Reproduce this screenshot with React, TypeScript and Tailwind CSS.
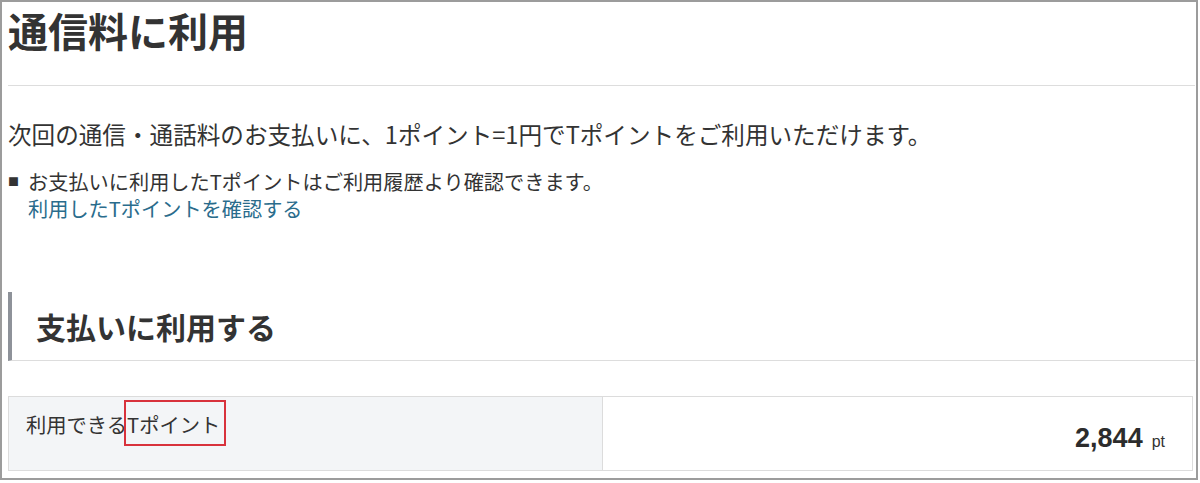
import React from "react";

export default function App() {
  const jp = { fontFamily: '"Noto Sans CJK JP", "Noto Sans", sans-serif' };
  return (
    <div className="w-[1200px] h-[483px] bg-white" style={jp}>
      <div className="w-[1198px] h-[480px] border-2 border-[#9c9c9c] pl-[6px] pr-[1px] text-[#333333]">
        <div className="h-[84px] border-b border-[#dddddd]">
          <h1 className="text-[40px] leading-[56px] font-bold text-[#333333]">通信料に利用</h1>
        </div>
        <p className="mt-[33px] text-[23.6px] leading-[31px]">
          次回の通信・通話料のお支払いに、1ポイント=1円でTポイントをご利用いただけます。
        </p>
        <div className="mt-[18px] flex text-[20.2px] leading-[27px]">
          <span className="w-[20px] h-[27px] text-[11px] flex items-center">■</span>
          <div className="flex flex-col">
            <span>お支払いに利用したTポイントはご利用履歴より確認できます。</span>
            <span className="text-[#2a6c8c]">利用したTポイントを確認する</span>
          </div>
        </div>
        <div className="mt-[70px] h-[69px] border-l-4 border-b border-l-[#8e9299] border-b-[#dddddd] pl-[24px] flex items-center">
          <h2 className="text-[30px] font-bold leading-[40px] text-[#333333]">支払いに利用する</h2>
        </div>
        <div className="mt-[35px] mr-[2px] h-[75px] flex border border-[#dcdcdc]">
          <div className="w-[594px] bg-[#f3f5f7] border-r border-[#dcdcdc] pl-[17px] pt-[13px] text-[20.3px] leading-[28px]">
            利用できる
            <span className="relative">
              Tポイント
              <span className="absolute left-[-3px] right-[-6px] top-[-9px] bottom-[-7px] border-2 border-[#d8323c]"></span>
            </span>
          </div>
          <div className="flex-1 flex items-center justify-end pr-[27px] pt-[10px]">
            <span className="text-[27px] font-bold text-[#2c2c2c]" style={{ fontFamily: '"Liberation Sans", Arial, sans-serif' }}>2,844</span>
            <span className="ml-[9px] text-[16px] text-[#333333] mt-[6px]" style={{ fontFamily: '"Liberation Sans", Arial, sans-serif' }}>pt</span>
          </div>
        </div>
      </div>
    </div>
  );
}
